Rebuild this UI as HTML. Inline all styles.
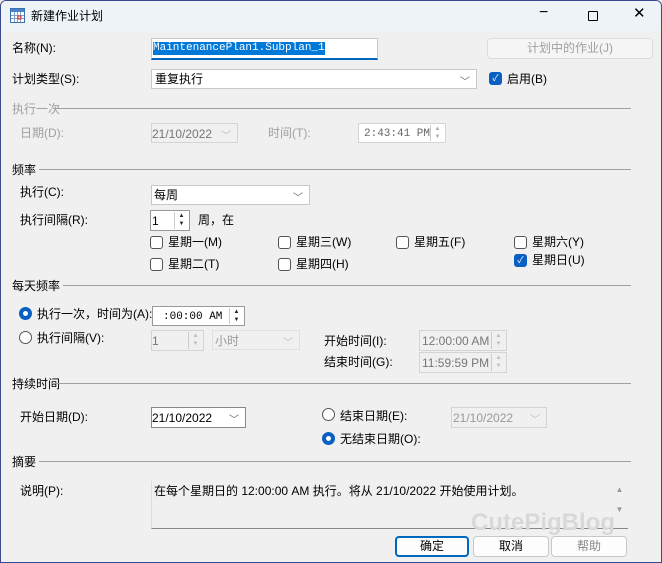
<!DOCTYPE html>
<html><head><meta charset="utf-8"><style>
*{box-sizing:border-box;margin:0;padding:0}
body{width:662px;height:563px;overflow:hidden;background:#f0f0f0;font-family:"Liberation Sans","Noto Sans CJK SC",sans-serif;font-size:12px;color:#000;position:relative}
.win{position:absolute;left:0;top:0;width:662px;height:563px;border:1px solid #3b4a8c;border-radius:6px 6px 0 0;background:#f0f0f0;overflow:hidden}
.tb{position:absolute;left:0;top:0;width:660px;height:30px;background:#eef3f8}
.a{position:absolute;white-space:nowrap;line-height:14px}
.g{color:#a0a0a0}
.box{position:absolute;background:#fff;border:1px solid #c8c8c8}
.dis{background:#f0f0f0;border-color:#d4d4d4;color:#777}
.mono{font-family:"Liberation Mono","Noto Sans CJK SC",monospace;font-size:11px}
.sec{position:absolute;height:1px;background:#a0a0a0;right:30px}
.cb{position:absolute;width:13px;height:13px;border:1px solid #555;border-radius:3px;background:#fff}
.cbk{background:#0a5fc2;border-color:#0a5fc2;color:#fff;font-size:9px;line-height:11px;text-align:center}
.rd{position:absolute;width:13px;height:13px;border:1px solid #555;border-radius:50%;background:#fff}
.rdk{border:4px solid #0a5fc2}
.chev{position:absolute;right:6px;top:3px;color:#666;font-size:10px}
.spin{position:absolute;right:1px;top:1px;width:14px;bottom:1px;border-left:1px solid #ccc;font-size:6px;text-align:center;line-height:8px;color:#222}
.btn{position:absolute;border:1px solid #c8c8c8;background:#fdfdfd;border-radius:4px;text-align:center;line-height:19px;font-size:12px}
</style></head><body><div class="win">
<div class="tb"></div>
<svg style="position:absolute;left:9px;top:7px" width="15" height="15"><rect x="0.5" y="0.5" width="14" height="14" fill="#fff" stroke="#3a6fb0"/><rect x="1" y="1" width="13" height="3" fill="#4a82c8"/><path d="M1 7.5H14M1 10.5H14M4.5 4V14M7.5 4V14M10.5 4V14" stroke="#7aa0d0"/><rect x="8" y="8" width="3" height="3" fill="none" stroke="#e03030"/></svg>
<div class="a" style="left:30px;top:8px">新建作业计划</div>
<div class="a" style="left:538px;top:5px;font-size:16px">−</div>
<div style="position:absolute;left:587px;top:10px;width:10px;height:10px;border:1px solid #000;border-radius:1px"></div>
<div class="a" style="left:632px;top:6px;font-size:15px">✕</div>

<div class="a" style="left:11px;top:40px">名称(N):</div>
<div class="box" style="left:150px;top:37px;width:227px;height:22px;border-bottom:2px solid #0067c0"><span class="mono" style="position:absolute;left:1px;top:3px;background:#0078d7;color:#fff;line-height:13px">MaintenancePlan1.Subplan_1</span></div>
<div class="btn g" style="left:486px;top:37px;width:166px;height:21px;background:#f5f5f5;border-color:#dcdcdc">计划中的作业(J)</div>

<div class="a" style="left:11px;top:71px">计划类型(S):</div>
<div class="box" style="left:150px;top:68px;width:326px;height:20px"><span class="a" style="left:3px;top:2px">重复执行</span><span class="chev">﹀</span></div>
<div class="cb cbk" style="left:488px;top:71px">✓</div>
<div class="a" style="left:506px;top:71px">启用(B)</div>

<div class="a g" style="left:11px;top:101px">执行一次</div><div class="sec" style="left:52px;top:107px"></div>
<div class="a g" style="left:19px;top:125px">日期(D):</div>
<div class="box dis" style="left:150px;top:122px;width:87px;height:20px"><span class="a" style="left:0;top:3px">21/10/2022</span><span class="chev" style="color:#bbb">﹀</span></div>
<div class="a g" style="left:267px;top:125px">时间(T):</div>
<div class="box" style="left:357px;top:122px;width:88px;height:20px;border-color:#d4d4d4"><span class="a mono" style="left:5px;top:3px;color:#666">2:43:41 PM</span><div class="spin" style="color:#aaa">▲<br>▼</div></div>

<div class="a" style="left:11px;top:162px">频率</div><div class="sec" style="left:38px;top:168px"></div>
<div class="a" style="left:19px;top:184px">执行(C):</div>
<div class="box" style="left:150px;top:184px;width:159px;height:20px"><span class="a" style="left:2px;top:2px">每周</span><span class="chev">﹀</span></div>
<div class="a" style="left:19px;top:212px">执行间隔(R):</div>
<div class="box" style="left:149px;top:209px;width:40px;height:21px;border-color:#999"><span class="a" style="left:1px;top:3px">1</span><div class="spin">▲<br>▼</div></div>
<div class="a" style="left:197px;top:212px">周，在</div>
<div class="cb" style="left:149px;top:235px"></div><div class="a" style="left:167px;top:234px">星期一(M)</div>
<div class="cb" style="left:149px;top:257px"></div><div class="a" style="left:167px;top:256px">星期二(T)</div>
<div class="cb" style="left:277px;top:235px"></div><div class="a" style="left:295px;top:234px">星期三(W)</div>
<div class="cb" style="left:277px;top:257px"></div><div class="a" style="left:295px;top:256px">星期四(H)</div>
<div class="cb" style="left:395px;top:235px"></div><div class="a" style="left:413px;top:234px">星期五(F)</div>
<div class="cb" style="left:513px;top:235px"></div><div class="a" style="left:531px;top:234px">星期六(Y)</div>
<div class="cb cbk" style="left:513px;top:253px">✓</div><div class="a" style="left:531px;top:252px">星期日(U)</div>

<div class="a" style="left:11px;top:278px">每天频率</div><div class="sec" style="left:62px;top:284px"></div>
<div class="rd rdk" style="left:18px;top:306px"></div><div class="a" style="left:36px;top:306px">执行一次，时间为(A):</div>
<div class="box" style="left:151px;top:305px;width:93px;height:20px;border-color:#999"><span class="a mono" style="left:10px;top:3px">:00:00 AM</span><div class="spin">▲<br>▼</div></div>
<div class="rd" style="left:18px;top:330px"></div><div class="a" style="left:36px;top:330px">执行间隔(V):</div>
<div class="box dis" style="left:150px;top:329px;width:53px;height:21px"><span class="a" style="left:0;top:3px">1</span><div class="spin" style="color:#bbb">▲<br>▼</div></div>
<div class="box dis" style="left:211px;top:329px;width:88px;height:20px;border-color:#e0e0e0"><span class="a" style="left:2px;top:3px;color:#999">小时</span><span class="chev" style="color:#bbb">﹀</span></div>
<div class="a" style="left:323px;top:333px">开始时间(I):</div>
<div class="box dis" style="left:418px;top:329px;width:88px;height:21px"><span class="a" style="left:2px;top:3px">12:00:00 AM</span><div class="spin" style="color:#bbb">▲<br>▼</div></div>
<div class="a" style="left:323px;top:354px">结束时间(G):</div>
<div class="box dis" style="left:418px;top:351px;width:88px;height:21px"><span class="a" style="left:2px;top:3px">11:59:59 PM</span><div class="spin" style="color:#bbb">▲<br>▼</div></div>

<div class="a" style="left:11px;top:376px">持续时间</div><div class="sec" style="left:50px;top:382px"></div>
<div class="a" style="left:19px;top:409px">开始日期(D):</div>
<div class="box" style="left:150px;top:406px;width:95px;height:21px;border-color:#888"><span class="a" style="left:0;top:3px">21/10/2022</span><span class="chev">﹀</span></div>
<div class="rd" style="left:321px;top:407px"></div><div class="a" style="left:339px;top:408px">结束日期(E):</div>
<div class="box dis" style="left:450px;top:406px;width:96px;height:21px"><span class="a" style="left:1px;top:3px;color:#999">21/10/2022</span><span class="chev" style="color:#bbb">﹀</span></div>
<div class="rd rdk" style="left:321px;top:431px"></div><div class="a" style="left:339px;top:431px">无结束日期(O):</div>

<div class="a" style="left:11px;top:454px">摘要</div><div class="sec" style="left:38px;top:460px"></div>
<div class="a" style="left:19px;top:483px">说明(P):</div>
<div style="position:absolute;left:150px;top:480px;width:477px;height:48px;border-bottom:1px solid #888;border-left:1px solid #ddd"><span class="a" style="left:2px;top:3px">在每个星期日的 12:00:00 AM 执行。将从 21/10/2022 开始使用计划。</span>
<div style="position:absolute;right:0;top:0;width:17px;height:46px;font-size:8px;color:#999;text-align:center;line-height:10px;padding-top:4px">▲<br><br>▼</div></div>
<div class="a" style="left:470px;top:515px;font-size:24px;font-weight:bold;color:#d8d8d8">CutePigBlog</div>
<div class="btn" style="left:394px;top:535px;width:74px;height:21px;border:2px solid #0067c0;line-height:17px">确定</div>
<div class="btn" style="left:472px;top:535px;width:76px;height:21px">取消</div>
<div class="btn" style="left:550px;top:535px;width:76px;height:21px;color:#888">帮助</div>
</div></body></html>
